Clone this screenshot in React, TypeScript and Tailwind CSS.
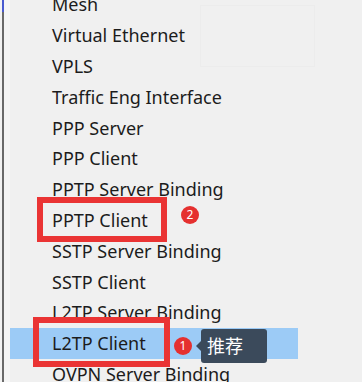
const items = [
  'Mesh',
  'Virtual Ethernet',
  'VPLS',
  'Traffic Eng Interface',
  'PPP Server',
  'PPP Client',
  'PPTP Server Binding',
  'PPTP Client',
  'SSTP Server Binding',
  'SSTP Client',
  'L2TP Server Binding',
  'L2TP Client',
  'OVPN Server Binding',
]

const Badge = ({ n }: { n: number }) => (
  <span className="flex h-[18px] w-[18px] items-center justify-center rounded-full bg-[#e5302f] text-[12px] leading-none text-white">
    {n}
  </span>
)

const App = () => {
  return (
    <div
      className="relative h-[382px] w-[362px] overflow-hidden bg-[#f0f0f0] text-[#1c1c1c]"
      style={{ fontFamily: '"Noto Sans", "Noto Sans CJK SC", sans-serif' }}
    >
      <div className="flex h-full">
        <div className="w-[2px] shrink-0 bg-[#f4f4f4]" />
        <div className="flex w-[2px] shrink-0 flex-col bg-[#6b6b6b]">
          <div className="h-[12px] bg-[#4a5bd0]" />
        </div>
        <div className="w-[6px] shrink-0 bg-[#f6f6f6]" />

        <div className="mt-[-10.5px] flex w-[288px] flex-col">
          {items.map((item) => {
            const active = item === 'L2TP Client'
            return (
              <div
                key={item}
                className={`relative flex h-[30.8px] shrink-0 items-center pl-[42px] text-[18px] ${active ? 'bg-[#9ccbf6]' : ''}`}
              >
                {item}
                {item === 'PPTP Client' && (
                  <>
                    <span className="absolute left-[27px] top-[-8px] h-[45px] w-[130px] border-[6px] border-[#ea3434]" />
                    <span className="absolute left-[171px] top-[-5px] flex h-full items-center">
                      <Badge n={2} />
                    </span>
                  </>
                )}
                {active && (
                  <>
                    <span className="absolute left-[23px] top-[-11px] h-[50px] w-[137px] border-[6px] border-[#ea3434]" />
                    <span className="absolute left-[164px] top-[1px] flex items-center">
                      <Badge n={1} />
                      <span className="ml-[4px] h-0 w-0 border-y-[5px] border-r-[5px] border-y-transparent border-r-[#3b4a5b]" />
                      <span className="flex h-[34px] w-[66px] items-center rounded-[3px] bg-[#3b4a5b] pl-[6px] text-[18px] text-white">
                        推荐
                      </span>
                    </span>
                  </>
                )}
              </div>
            )
          })}
        </div>
      </div>
      <div className="absolute left-[200px] top-[5px] h-[62px] w-[115px] border border-[#ececec]" />
    </div>
  )
}

export default App
